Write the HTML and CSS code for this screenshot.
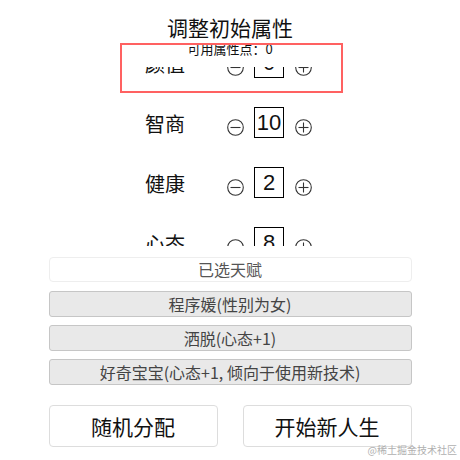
FILE: index.html
```html
<!DOCTYPE html>
<html lang="zh">
<head>
<meta charset="utf-8">
<link rel="stylesheet" href="styles.css">
</head>
<body>
<div class="page">
  <div class="title">调整初始属性</div>
  <div class="points">可用属性点：0</div>
  <div class="viewport">
    <div class="attr-list">
      <div class="attr-row">
        <span class="label">颜值</span>
        <svg class="btn" viewBox="0 0 17 17"><circle cx="8.5" cy="8.5" r="7.8"/><line x1="3.5" y1="8.5" x2="13.5" y2="8.5"/></svg>
        <span class="value">0</span>
        <svg class="btn" viewBox="0 0 17 17"><circle cx="8.5" cy="8.5" r="7.8"/><line x1="3.5" y1="8.5" x2="13.5" y2="8.5"/><line x1="8.5" y1="3.5" x2="8.5" y2="13.5"/></svg>
      </div>
      <div class="attr-row">
        <span class="label">智商</span>
        <svg class="btn" viewBox="0 0 17 17"><circle cx="8.5" cy="8.5" r="7.8"/><line x1="3.5" y1="8.5" x2="13.5" y2="8.5"/></svg>
        <span class="value">10</span>
        <svg class="btn" viewBox="0 0 17 17"><circle cx="8.5" cy="8.5" r="7.8"/><line x1="3.5" y1="8.5" x2="13.5" y2="8.5"/><line x1="8.5" y1="3.5" x2="8.5" y2="13.5"/></svg>
      </div>
      <div class="attr-row">
        <span class="label">健康</span>
        <svg class="btn" viewBox="0 0 17 17"><circle cx="8.5" cy="8.5" r="7.8"/><line x1="3.5" y1="8.5" x2="13.5" y2="8.5"/></svg>
        <span class="value">2</span>
        <svg class="btn" viewBox="0 0 17 17"><circle cx="8.5" cy="8.5" r="7.8"/><line x1="3.5" y1="8.5" x2="13.5" y2="8.5"/><line x1="8.5" y1="3.5" x2="8.5" y2="13.5"/></svg>
      </div>
      <div class="attr-row">
        <span class="label">心态</span>
        <svg class="btn" viewBox="0 0 17 17"><circle cx="8.5" cy="8.5" r="7.8"/><line x1="3.5" y1="8.5" x2="13.5" y2="8.5"/></svg>
        <span class="value">8</span>
        <svg class="btn" viewBox="0 0 17 17"><circle cx="8.5" cy="8.5" r="7.8"/><line x1="3.5" y1="8.5" x2="13.5" y2="8.5"/><line x1="8.5" y1="3.5" x2="8.5" y2="13.5"/></svg>
      </div>
    </div>
  </div>
  <div class="talents">
    <div class="talent-header">已选天赋</div>
    <div class="talent">程序媛(性别为女)</div>
    <div class="talent">洒脱(心态+1)</div>
    <div class="talent">好奇宝宝(心态+1, 倾向于使用新技术)</div>
  </div>
  <div class="actions">
    <div class="action">随机分配</div>
    <div class="action">开始新人生</div>
  </div>
  <div class="highlight"></div>
  <div class="watermark">@稀土掘金技术社区</div>
</div>
</body>
</html>
```

FILE: styles.css
```css
html, body {
  margin: 0;
  padding: 0;
  background: #fff;
}
.page {
  position: relative;
  width: 460px;
  height: 460px;
  padding-top: 13px;
  box-sizing: border-box;
  font-family: "Noto Sans CJK SC", "Noto Sans", sans-serif;
  color: #111;
  overflow: hidden;
}
.title {
  text-align: center;
  font-size: 21px;
  line-height: 28px;
}
.points {
  text-align: center;
  font-size: 13px;
  line-height: 16px;
}
.viewport {
  margin-top: 10px;
  height: 179px;
  overflow: hidden;
}
.attr-list {
  margin-top: -35px;
}
.attr-row {
  height: 60px;
  display: flex;
  align-items: center;
  justify-content: center;
  padding-right: 3px;
}
.label {
  font-size: 20px;
  line-height: 24px;
  width: 40px;
  margin-right: 42px;
  margin-top: 3px;
}
.btn {
  width: 17px;
  height: 17px;
  margin-top: 10px;
  fill: none;
  stroke: #333;
  stroke-width: 1.1;
}
.value {
  box-sizing: border-box;
  width: 30px;
  height: 31px;
  border: 1px solid #000;
  margin: 0 11px 0 10px;
  font-family: "Liberation Sans", Arial, sans-serif;
  font-size: 22px;
  line-height: 29px;
  text-align: center;
}
.talents {
  width: 363px;
  margin: 11px auto 0;
  display: flex;
  flex-direction: column;
  gap: 8px;
}
.talent-header,
.talent {
  box-sizing: border-box;
  text-align: center;
  font-size: 16px;
}
.talent-header {
  height: 25px;
  line-height: 23px;
  border: 1px solid #eeeeee;
  border-radius: 4px;
  color: #555;
  margin-bottom: 1px;
}
.talent {
  height: 26px;
  line-height: 24px;
  background: #e9e9e9;
  border: 1px solid #c6c6c6;
  border-radius: 3px;
  color: #444;
}
.actions {
  display: flex;
  justify-content: center;
  gap: 25px;
  margin-top: 20px;
}
.action {
  box-sizing: border-box;
  width: 169px;
  height: 42px;
  border: 1px solid #dddddd;
  border-radius: 4px;
  background: #fff;
  font-size: 21px;
  line-height: 40px;
  text-align: center;
  color: #111;
}
.highlight {
  position: absolute;
  left: 120px;
  top: 43px;
  width: 223px;
  height: 50px;
  box-sizing: border-box;
  border: 2px solid #ff6161;
}
.watermark {
  position: absolute;
  right: 3px;
  bottom: 4px;
  font-size: 10px;
  line-height: 12px;
  color: #b0b0b0;
}
```
